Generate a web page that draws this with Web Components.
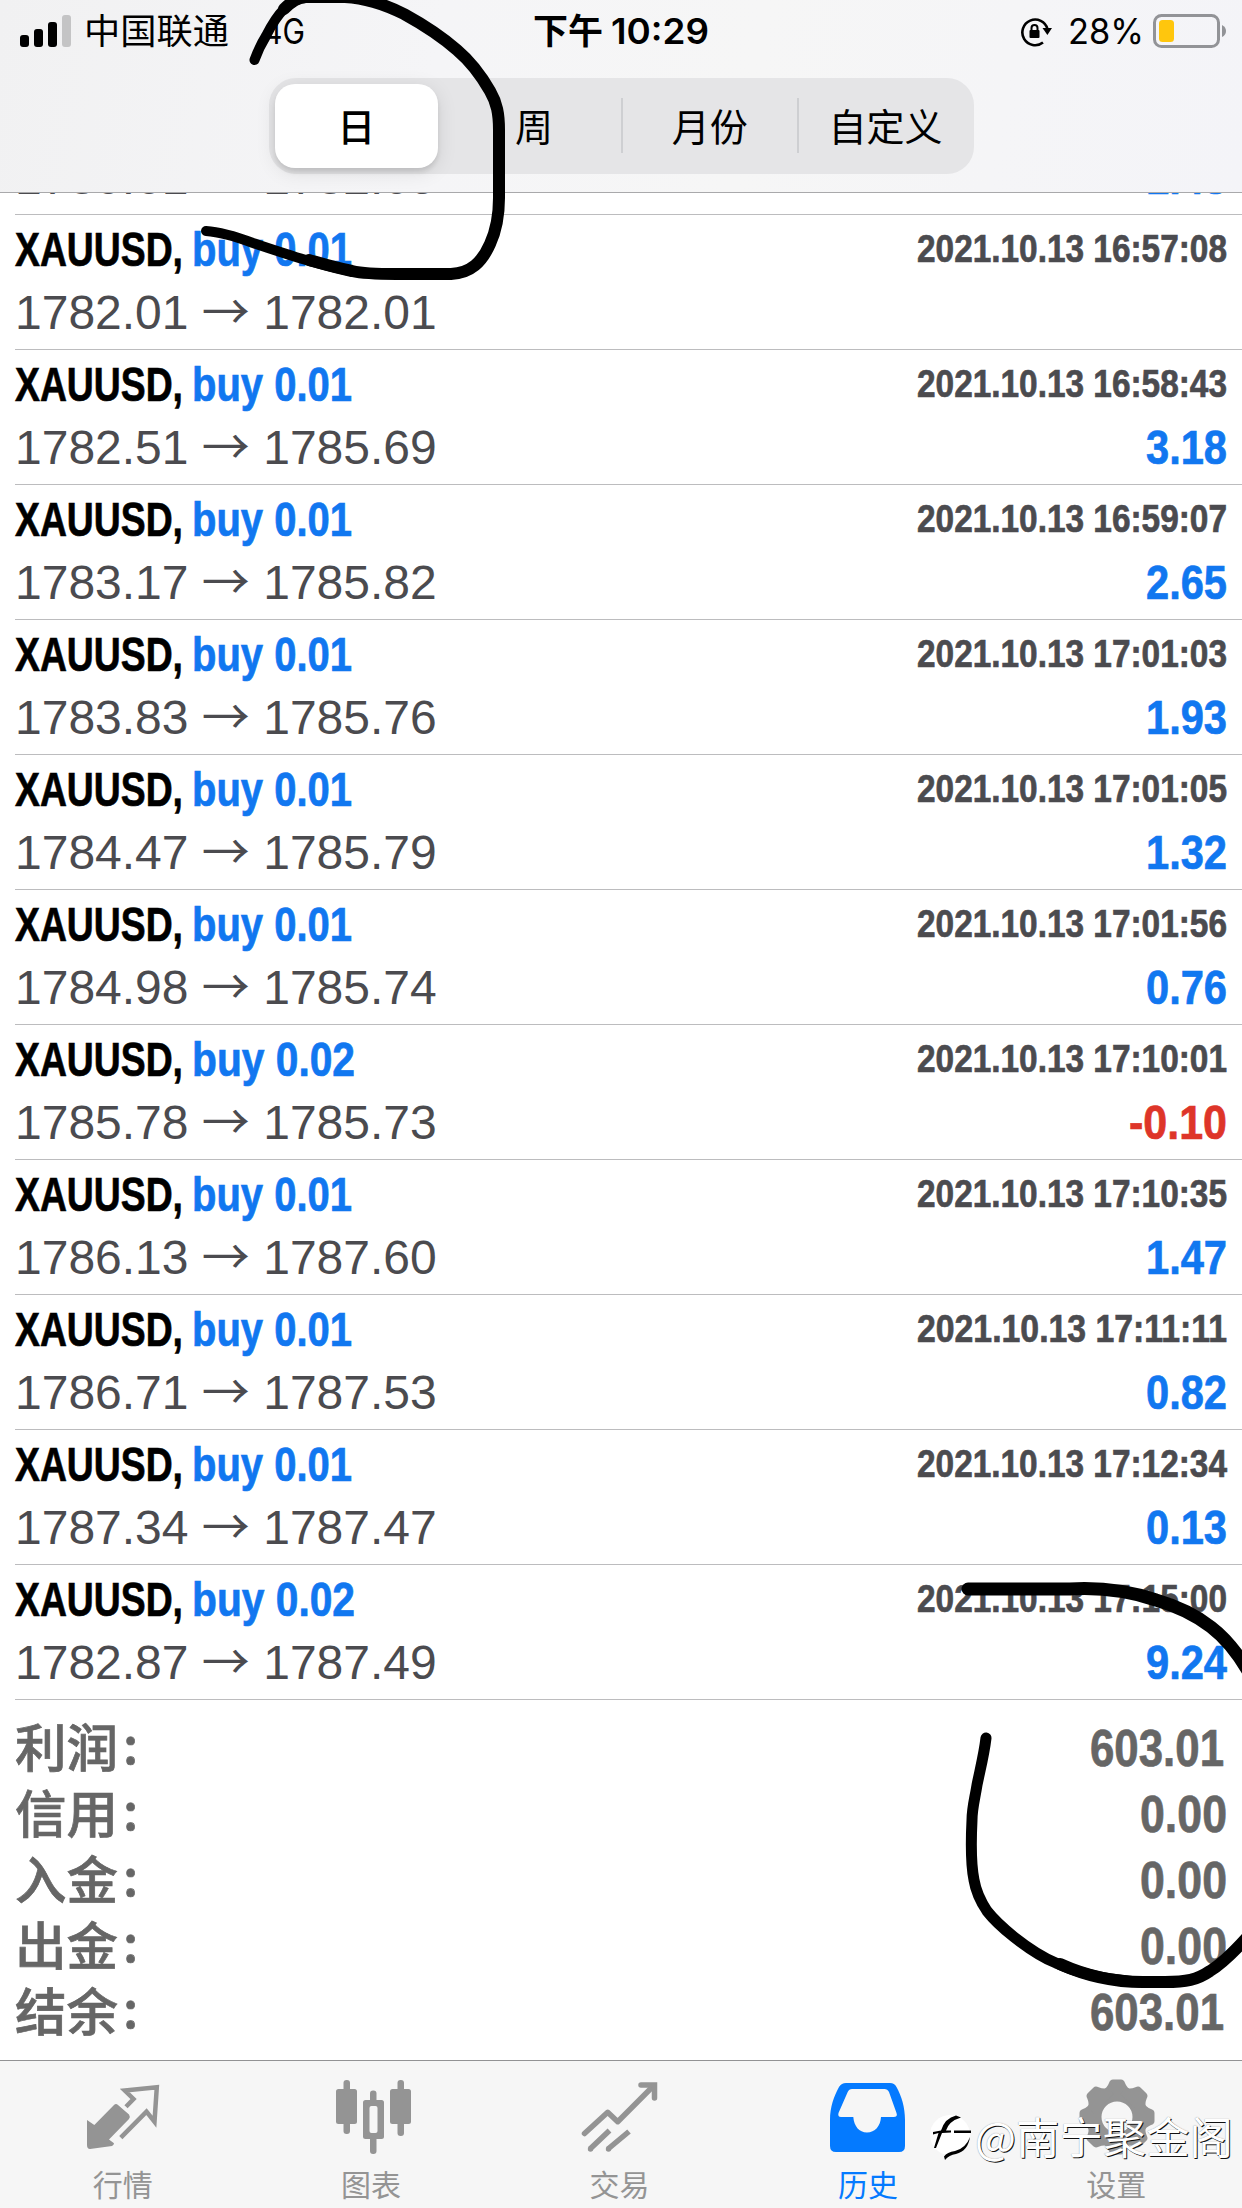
<!DOCTYPE html>
<html lang="zh-CN">
<head>
<meta charset="utf-8">
<title>历史</title>
<style>
    body {
        margin: 0;
        font-family: "Liberation Sans", "Noto Sans CJK SC", sans-serif;
    }
</style>
</head>
<body>
<history-app></history-app>

<script>
class FitText extends HTMLElement {
    constructor() {
        super();

        this.attachShadow({ mode: 'open' });

        this.shadowRoot.innerHTML = `
            <style>
                :host {
                    display: block;
                    flex: none;
                    white-space: nowrap;
                }
                span {
                    display: block;
                    width: max-content;
                    transform-origin: left;
                }
            </style>
            <span><slot></slot></span>
        `;
    }

    connectedCallback() {
        const width = Number(this.getAttribute('width'));
        const textEl = this.shadowRoot.querySelector('span');

        this.style.width = `${width}px`;
        textEl.style.transform = `scaleX(${width / textEl.getBoundingClientRect().width})`;
    }
}

customElements.define('fit-text', FitText);

class StatusBar extends HTMLElement {
    constructor() {
        super();

        this.attachShadow({ mode: 'open' });

        this.shadowRoot.innerHTML = `
            <style>
                :host {
                    display: grid;
                    grid-template-columns: 1fr auto 1fr;
                    height: 64px;
                    line-height: 64px;
                    padding: 0 15px 0 20px;
                    font-family: Inter, "Noto Sans CJK SC", sans-serif;
                    font-size: 35px;
                    color: #000;
                }
                div {
                    display: flex;
                    align-items: center;
                    height: 62px;
                }
                svg {
                    display: block;
                    flex: none;
                }
                .carrier { margin-left: 13px; }
                .network { margin-left: 34px; }
                .time { font-weight: 600; margin-left: -5px; }
                .time fit-text + fit-text { margin-left: 8px; }
                .right { justify-content: flex-end; }
                .percent { margin: 0 9px 0 16px; }
            </style>
            <div>
                <svg width="51" height="34" viewBox="0 0 51 34">
                    <rect y="21" width="9" height="12" rx="3"/>
                    <rect x="14" y="15" width="9" height="18" rx="3"/>
                    <rect x="28" y="8" width="9" height="25" rx="3"/>
                    <rect x="42" y="1" width="9" height="32" rx="3" fill="#c4c4c5"/>
                </svg>
                <fit-text class="carrier" width="145">中国联通</fit-text>
                <fit-text class="network" width="42">4G</fit-text>
            </div>
            <div class="time"><fit-text width="70">下午</fit-text><fit-text width="98">10:29</fit-text></div>
            <div class="right">
                <svg width="32" height="34" viewBox="0 0 32 34">
                    <path d="M23 28.5A12.8 12.8 0 1 1 27.5 15" fill="none" stroke="#000" stroke-width="2.6"/>
                    <path d="M22.5 14h9.5l-4.6 7z"/>
                    <rect x="9.5" y="16" width="10" height="8" rx="1"/>
                    <path d="M11.5 17v-3a3 3 0 0 1 6 0v3" fill="none" stroke="#000" stroke-width="2"/>
                </svg>
                <fit-text class="percent" width="76">28%</fit-text>
                <svg width="74" height="36" viewBox="0 0 74 36">
                    <rect x="1.5" y="2.5" width="64" height="31" rx="7" fill="none" stroke="#929397" stroke-width="3"/>
                    <rect x="6" y="7" width="15" height="22" rx="3.5" fill="#ffc60d"/>
                    <path d="M69 12q4 2 4 6t-4 6z" fill="#929397"/>
                </svg>
            </div>
        `;
    }
}

customElements.define('status-bar', StatusBar);

class PeriodSwitch extends HTMLElement {
    constructor() {
        super();

        this.attachShadow({ mode: 'open' });

        this.shadowRoot.innerHTML = `
            <style>
                :host {
                    display: grid;
                    grid-template-columns: repeat(4, 1fr);
                    box-sizing: border-box;
                    width: 705px;
                    height: 96px;
                    margin: 14px auto 0;
                    padding: 6px 0 6px 2px;
                    border-radius: 27px;
                    background: #e5e5e7;
                    font-size: 38px;
                    font-family: "Noto Sans CJK SC", sans-serif;
                    line-height: 81px;
                    text-align: center;
                }
                div { position: relative; }
                .active {
                    margin: 0 8px 0 4px;
                    border-radius: 20px;
                    background: #fff;
                    font-weight: 500;
                    box-shadow: 0 4px 4px rgba(0, 0, 0, .1), 0 4px 20px rgba(0, 0, 0, .1);
                }
                .divided::before {
                    content: '';
                    position: absolute;
                    left: -1px;
                    top: 14px;
                    width: 2px;
                    height: 55px;
                    background: #cecfd2;
                }
            </style>
            <div class="active">日</div>
            <div>周</div>
            <div class="divided">月份</div>
            <div class="divided">自定义</div>
        `;
    }
}

customElements.define('period-switch', PeriodSwitch);

class TradeRow extends HTMLElement {
    constructor() {
        super();

        this.attachShadow({ mode: 'open' });
    }

    connectedCallback() {
        const volume = this.getAttribute('volume');
        const profit = this.getAttribute('profit');
        const negative = profit.startsWith('-');

        this.shadowRoot.innerHTML = `
            <style>
                :host {
                    display: flex;
                    justify-content: space-between;
                    box-sizing: border-box;
                    height: 135px;
                    margin-left: 15px;
                    padding: 5px 15px 0 0;
                    border-bottom: 1px solid #bcbcbe;
                    font-size: 48px;
                    line-height: 62px;
                    color: #4b4b4f;
                }
                .title {
                    height: 62px;
                    line-height: 60px;
                    font-weight: bold;
                    color: #000;
                }
                .title, .date, .profit {
                    display: flex;
                    -webkit-text-stroke: .7px;
                }
                .buy { margin-left: 9px; color: #1177f0; }
                .prices { height: 62px; white-space: pre; }
                .arrow {
                    font-family: "Noto Sans CJK SC", sans-serif;
                    line-height: 0;
                }
                .date {
                    height: 62px;
                    line-height: 58px;
                    font-size: 39px;
                    font-weight: bold;
                }
                .profit {
                    justify-content: flex-end;
                    font-weight: bold;
                    color: ${negative ? '#de3529' : '#1177f0'};
                }
            </style>
            <div>
                <div class="title">
                    <fit-text width="168">${this.getAttribute('symbol')},</fit-text>
                    <fit-text class="buy" width="${volume.endsWith('1') ? 160 : 163}">buy ${volume}</fit-text>
                </div>
                <div class="prices">${this.getAttribute('open')} <span class="arrow">→</span> ${this.getAttribute('close')}</div>
            </div>
            <div>
                <div class="date"><fit-text width="310">${this.getAttribute('date')}</fit-text></div>
                <div class="profit">${profit ? `<fit-text width="${negative ? 98 : 81}">${profit}</fit-text>` : ''}</div>
            </div>
        `;
    }
}

customElements.define('trade-row', TradeRow);

class SummaryLine extends HTMLElement {
    constructor() {
        super();

        this.attachShadow({ mode: 'open' });
    }

    connectedCallback() {
        const value = this.getAttribute('value');
        const wide = value.length > 4;

        this.shadowRoot.innerHTML = `
            <style>
                :host {
                    display: flex;
                    justify-content: space-between;
                    height: 66px;
                    line-height: 68px;
                    padding: 0 ${wide ? 18 : 15}px 0 15px;
                    font-size: 51px;
                    color: #666;
                }
                .label {
                    display: flex;
                    line-height: 60px;
                    font-family: "Noto Sans CJK SC", sans-serif;
                    font-weight: 500;
                    -webkit-text-stroke: .7px;
                }
                .colon { margin-left: 5px; line-height: 54px; }
                .value { font-weight: bold; -webkit-text-stroke: .7px; }
            </style>
            <div class="label"><fit-text width="103">${this.getAttribute('label')}</fit-text><span class="colon">:</span></div>
            <fit-text class="value" width="${wide ? 134 : 87}">${value}</fit-text>
        `;
    }
}

customElements.define('summary-line', SummaryLine);

class TabItem extends HTMLElement {
    constructor() {
        super();

        this.attachShadow({ mode: 'open' });

        this.shadowRoot.innerHTML = `
            <style>
                :host {
                    display: flex;
                    flex-direction: column;
                    align-items: center;
                    padding-top: 15px;
                    color: #949494;
                    font-family: "Noto Sans CJK SC", sans-serif;
                    font-size: 30px;
                    line-height: 44px;
                    text-indent: -3px;
                }
                :host([active]) { color: #047aff; }
                ::slotted(svg) {
                    display: block;
                    width: 80px;
                    height: 80px;
                    margin-bottom: 5px;
                    fill: currentColor;
                }
            </style>
            <slot name="icon"></slot>
            <slot></slot>
        `;
    }
}

customElements.define('tab-item', TabItem);

class TabBar extends HTMLElement {
    constructor() {
        super();

        const teeth = [0, 45, 90, 135, 180, 225, 270, 315]
            .map(a => `<path transform="rotate(${a} 39 41)" d="M25 14Q29 12 31 7Q32 3.5 35 3.5H43Q46 3.5 47 7Q49 12 53 14V22H25Z"/>`)
            .join('');

        this.attachShadow({ mode: 'open' });

        this.shadowRoot.innerHTML = `
            <style>
                :host {
                    display: grid;
                    grid-template-columns: repeat(5, 1fr);
                    height: 147px;
                    border-top: 1px solid #929294;
                    background: #f6f6f6;
                }
            </style>
            <tab-item>
                <svg slot="icon" viewBox="0 0 80 80">
                    <path d="M3 44L10.3 49 30 29Q32 27 34 29L45 38.5Q46.5 40.5 45 43L25 63.5 30 67.3Q30 69 28 70L6 73Q3 73 3 69Z"/>
                    <path d="M42 30.7L49.5 23 40.8 14.5 72.8 11.3 70.5 45.7 62.5 35.7 36.8 61.7" fill="none" stroke="currentColor" stroke-width="4.5"/>
                </svg>
                行情
            </tab-item>
            <tab-item>
                <svg slot="icon" viewBox="0 0 80 80">
                    <rect x="10.5" y="4" width="6.5" height="54" rx="3"/>
                    <rect x="3" y="13" width="21" height="35" rx="2.5"/>
                    <rect x="64.5" y="4" width="6.5" height="56" rx="3"/>
                    <rect x="57" y="13" width="21" height="35" rx="2.5"/>
                    <rect x="37" y="14.5" width="6.5" height="63.5" rx="3"/>
                    <rect x="30" y="24" width="21" height="39" rx="2.5"/>
                    <rect x="36.5" y="30" width="8" height="27" rx="2" fill="#f6f6f6"/>
                </svg>
                图表
            </tab-item>
            <tab-item>
                <svg slot="icon" viewBox="0 0 80 80">
                    <g fill="none" stroke="currentColor" stroke-width="5.5">
                        <path d="M3.5 57.5L26.7 36.3 36.7 45.7 72.3 10" stroke-linejoin="round" stroke-linecap="round"/>
                        <path d="M60 9H73.5V22" stroke-linecap="round"/>
                        <path d="M9 73L28.5 54.5M27 73L48 55.5"/>
                    </g>
                    <circle cx="9.5" cy="73" r="2.7"/>
                    <circle cx="27.5" cy="73" r="2.7"/>
                </svg>
                交易
            </tab-item>
            <tab-item active>
                <svg slot="icon" viewBox="0 0 80 80">
                    <path fill-rule="evenodd" d="M1 70V44C1 31 5 20 10 11Q12.5 7 17 7H61Q65.5 7 67.5 11C72.5 20 76 31 76 44V70Q76 76 70 76H7Q1 76 1 70ZM18.7 16L9.5 37Q8.5 41 12 41H24.3C25 50 30 56.5 38 56.5S51.5 50 52 41H64.5Q69 41 67.5 37L60 16Q58.5 13 55.5 13H23Q20 13 18.7 16Z"/>
                </svg>
                历史
            </tab-item>
            <tab-item>
                <svg slot="icon" viewBox="0 0 80 80">
                    <circle cx="39" cy="41" r="23" fill="none" stroke="currentColor" stroke-width="15"/>
                    ${teeth}
                </svg>
                设置
            </tab-item>
        `;
    }
}

customElements.define('tab-bar', TabBar);

class UserMark extends HTMLElement {
    constructor() {
        super();

        this.attachShadow({ mode: 'open' });

        this.shadowRoot.innerHTML = `
            <style>
                :host {
                    position: absolute;
                    right: 9px;
                    bottom: 41px;
                    display: flex;
                    align-items: center;
                    height: 64px;
                    font-family: "Noto Sans CJK SC", sans-serif;
                    font-size: 43px;
                    line-height: 64px;
                    color: #fff;
                    text-shadow: 1px 1px 0 #111, 0 0 1px #888;
                }
                svg { width: 46px; height: 50px; margin-top: 6px; }
            </style>
            <svg viewBox="0 0 46 50">
                <circle cx="21" cy="22" r="20" fill="#fff"/>
                <path d="M4 19L12 17.500Q16 5 27 2.500L32 4.500Q20 8 17 17.500H22V19.500L13 20 7 35 5 35 9.500 20 4 21.500ZM25 17.500H42V20H25ZM41 24Q39 38 27 41 20 42 16 47L15 43.500Q18 39 26 38 37 35 41 24Z"/>
            </svg>
            <fit-text width="258">@南宁聚金阁</fit-text>
        `;
    }
}

customElements.define('user-mark', UserMark);

// Freehand pen strokes drawn over the whole screen
class PenMarks extends HTMLElement {
    constructor() {
        super();

        this.attachShadow({ mode: 'open' });

        this.shadowRoot.innerHTML = `
            <style>
                :host {
                    position: absolute;
                    inset: 0;
                    overflow: hidden;
                    pointer-events: none;
                }
                svg { display: block; }
            </style>
            <svg width="1242" height="2208" viewBox="0 0 1242 2208" fill="none" stroke="#000" stroke-width="12" stroke-linecap="round" stroke-linejoin="round">
                <path stroke-width="10" d="M254.5 60C257 53 261 44 266 36C271 26 277 16 284 9C290 3 297 -2 306 -2"/>
                <path d="M284 9C290 3 297 -3 306 -3H345C366 -2 388 6 404 14C424 25 441 36 457 50C470 61 482 77 490 91C497 103 499 114 499 130V198C499 215 496 231 490 244C482 262 471 273 451 274H396C378 274 365 274 352 271C336 268 323 264 309 260"/>
                <path stroke-width="10" d="M352 271.5C318 265 286 254 253 243C237 237 222 232 206 231"/>
                <path d="M968 1589H987Q1000 1589 1013 1589H1070C1104 1587 1132 1592 1156 1600C1180 1607 1197 1616 1211 1627C1228 1640 1240 1656 1252 1678" stroke-width="13"/>
                <path stroke-width="11" d="M986 1738C984 1755 980 1770 977 1785C975 1798 972 1808 972 1820C971 1840 971 1865 974 1880C976 1892 981 1902 987 1911C994 1920 1004 1929 1014 1937C1028 1948 1041 1957 1056 1963C1078 1973 1105 1980 1140 1982"/>
                <path d="M1060 1964C1082 1974 1108 1982 1143 1982H1165C1186 1982 1197 1980 1210 1971C1223 1963 1235 1951 1250 1934"/>
            </svg>
        `;
    }
}

customElements.define('pen-marks', PenMarks);

const TRADES = [
    ['0.01', '2021.10.13 16:55:49', '1780.61', '1782.09', '1.48'],
    ['0.01', '2021.10.13 16:57:08', '1782.01', '1782.01', ''],
    ['0.01', '2021.10.13 16:58:43', '1782.51', '1785.69', '3.18'],
    ['0.01', '2021.10.13 16:59:07', '1783.17', '1785.82', '2.65'],
    ['0.01', '2021.10.13 17:01:03', '1783.83', '1785.76', '1.93'],
    ['0.01', '2021.10.13 17:01:05', '1784.47', '1785.79', '1.32'],
    ['0.01', '2021.10.13 17:01:56', '1784.98', '1785.74', '0.76'],
    ['0.02', '2021.10.13 17:10:01', '1785.78', '1785.73', '-0.10'],
    ['0.01', '2021.10.13 17:10:35', '1786.13', '1787.60', '1.47'],
    ['0.01', '2021.10.13 17:11:11', '1786.71', '1787.53', '0.82'],
    ['0.01', '2021.10.13 17:12:34', '1787.34', '1787.47', '0.13'],
    ['0.02', '2021.10.13 17:15:00', '1782.87', '1787.49', '9.24']
];

const SUMMARY = [
    ['利润', '603.01'],
    ['信用', '0.00'],
    ['入金', '0.00'],
    ['出金', '0.00'],
    ['结余', '603.01']
];

class HistoryApp extends HTMLElement {
    constructor() {
        super();

        this.attachShadow({ mode: 'open' });

        this.shadowRoot.innerHTML = `
            <style>
                :host {
                    position: relative;
                    display: flex;
                    flex-direction: column;
                    width: 1242px;
                    height: 2208px;
                    overflow: hidden;
                    background: #fff;
                }
                header {
                    flex: none;
                    height: 192px;
                    border-bottom: 1px solid #a9a9ab;
                    background: linear-gradient(100deg, #f1f1f2, #f5f5f7 35%, #f6f6f6 60%, #f4f4f8);
                }
                /* scrolled so that the first row is mostly under the header */
                main {
                    flex: 1;
                    display: flex;
                    flex-direction: column;
                    justify-content: flex-end;
                    min-height: 0;
                    overflow: hidden;
                }
                trade-row, tab-bar { flex: none; }
                .summary {
                    flex: none;
                    padding: 15px 0 15px;
                }
            </style>
            <header>
                <status-bar></status-bar>
                <period-switch></period-switch>
            </header>
            <main>
                ${TRADES.map(this._renderTrade).join('')}
                <div class="summary">
                    ${SUMMARY.map(([label, value]) => `<summary-line label="${label}" value="${value}"></summary-line>`).join('')}
                </div>
            </main>
            <tab-bar></tab-bar>
            <user-mark></user-mark>
            <pen-marks></pen-marks>
        `;
    }

    _renderTrade([volume, date, open, close, profit]) {
        return `<trade-row symbol="XAUUSD" volume="${volume}" date="${date}" open="${open}" close="${close}" profit="${profit}"></trade-row>`;
    }
}

customElements.define('history-app', HistoryApp);
</script>
</body>
</html>
